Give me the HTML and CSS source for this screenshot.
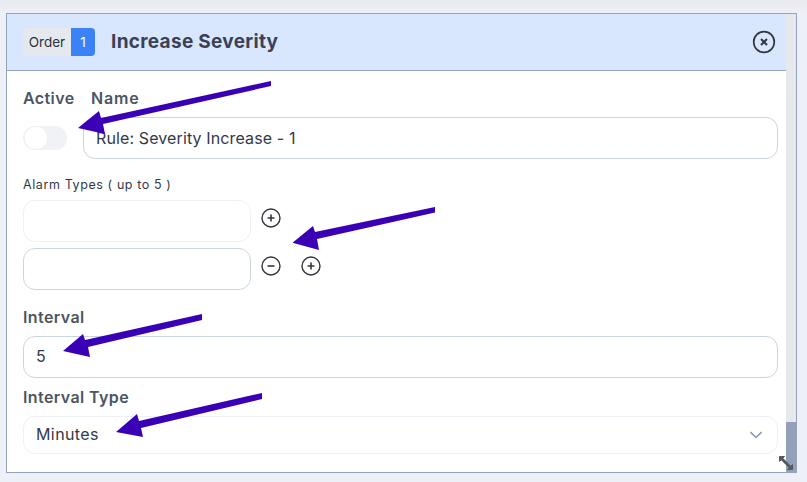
FILE: index.html
```html
<!DOCTYPE html>
<html lang="en">
<head>
<meta charset="utf-8">
<title>Increase Severity</title>
<link rel="stylesheet" href="styles.css">
</head>
<body>
<div class="modal">
  <div class="main">
    <header class="head">
      <div class="order"><span class="order-label">Order</span><span class="order-num">1</span></div>
      <h1 class="title">Increase Severity</h1>
      <svg class="close" width="24" height="24" viewBox="0 0 24 24" fill="none" stroke="#33363f"><circle cx="12" cy="12" r="10.3" stroke-width="1.7"/><path d="M9 9l6 6M15 9l-6 6" stroke-width="2"/></svg>
    </header>
    <div class="content">
      <div class="row-top">
        <div class="col-active">
          <div class="label">Active</div>
          <div class="toggle"><span class="knob"></span></div>
        </div>
        <div class="col-name">
          <div class="label name-label">Name</div>
          <div class="field name-field">Rule: Severity Increase - 1</div>
        </div>
      </div>
      <div class="small-label">Alarm Types ( up to 5 )</div>
      <div class="alarm-row">
        <div class="field alarm faint"></div>
        <svg class="ic" width="20" height="20" viewBox="0 0 20 20" fill="none" stroke="#33363f" stroke-width="1.4"><circle cx="10" cy="10" r="9"/><path d="M10 6.5v7M6.5 10h7" stroke-width="1.6"/></svg>
      </div>
      <div class="alarm-row second">
        <div class="field alarm"></div>
        <svg class="ic" width="20" height="20" viewBox="0 0 20 20" fill="none" stroke="#33363f" stroke-width="1.4"><circle cx="10" cy="10" r="9"/><path d="M6.5 10h7" stroke-width="1.6"/></svg>
        <svg class="ic" width="20" height="20" viewBox="0 0 20 20" fill="none" stroke="#33363f" stroke-width="1.4"><circle cx="10" cy="10" r="9"/><path d="M10 6.5v7M6.5 10h7" stroke-width="1.6"/></svg>
      </div>
      <div class="label interval-label">Interval</div>
      <div class="field wide">5</div>
      <div class="label type-label">Interval Type</div>
      <div class="field select faint">
        <span class="select-text">Minutes</span>
        <svg class="chevron" width="14" height="8" viewBox="0 0 14 8" fill="none" stroke="#8a96b4" stroke-width="1.6"><path d="M1.5 1.2L7 6.5l5.5-5.3"/></svg>
      </div>
    </div>
  </div>
  <div class="scrollbar"><div class="thumb"></div></div>
  <svg class="resize" width="14" height="14" viewBox="0 0 14 14" fill="none"><path d="M3 3l8 8" stroke="#555a60" stroke-width="3"/><path d="M0.500 5.500v-5h5z M13.500 8.500v5h-5z" fill="#555a60" stroke="#555a60"/></svg>
</div>
<svg class="arrows" width="807" height="482" viewBox="0 0 807 482" fill="#3a00b5">
  <path d="M271 86L271 81L101 118L99 111L78 128L105 134L103 124Z"/>
  <path d="M435 212.500L435 207L315 232L313 226L292.500 242.700L319 250L317 239Z"/>
  <path d="M202 320L202 314L85 340L83 334L63 351L90 357L88 347Z"/>
  <path d="M262 399L262 393L139 421L137 414L116 432L143 437L141 428Z"/>
</svg>
</body>
</html>
```
FILE: styles.css
```css
* { box-sizing: border-box; }
html, body { margin: 0; height: 100%; }
body {
  background: linear-gradient(#e9ebf0 0, #eef0f8 14px);
  font-family: "Inter", "Open Sans", sans-serif;
  color: #33394a;
  padding: 13px 10px 9px 6px;
  overflow: hidden;
  position: relative;
}
.modal {
  width: 791px;
  height: 460px;
  border: 1px solid #94a3b8;
  background: #fff;
  display: flex;
  position: relative;
}
.main { flex: 1; min-width: 0; }
.scrollbar {
  width: 10px;
  background: #e5e9ec;
  display: flex;
  flex-direction: column;
  justify-content: flex-end;
}
.thumb { height: 50px; background: #949fba; }
.head {
  height: 57px;
  background: #d9e7fe;
  border-bottom: 1px solid #94a3b8;
  display: flex;
  align-items: center;
  padding: 0 10px 0 16px;
}
.order {
  display: flex;
  height: 28px;
  border-radius: 4px;
  overflow: hidden;
  font-size: 13.5px;
  margin-right: 16px;
}
.order-label {
  width: 48px;
  background: #e5e9ee;
  color: #2d3340;
  display: flex;
  align-items: center;
  justify-content: center;
}
.order-num {
  width: 24px;
  background: #3b82f6;
  color: #fff;
  display: flex;
  align-items: center;
  justify-content: center;
}
.title {
  margin: 0;
  flex: 1;
  font-size: 19px;
  line-height: 24px;
  font-weight: 700;
  color: #3b4154;
  letter-spacing: 0.3px;
}
.close { display: block; }
.content { padding: 0 8px 0 16px; }
.row-top { display: flex; height: 88px; }
.col-active { width: 60px; }
.col-name { flex: 1; min-width: 0; }
.label {
  font-size: 16px;
  line-height: 20px;
  font-weight: 600;
  color: #4b5563;
  letter-spacing: 0.4px;
}
.col-active .label { padding-top: 17px; margin-bottom: 18px; }
.name-label { padding-top: 17px; padding-left: 8px; margin-bottom: 9px; letter-spacing: 0.8px; }
.toggle {
  width: 44px;
  height: 24px;
  border-radius: 12px;
  background: #f0f2f5;
  padding: 1px 2px;
}
.knob {
  display: block;
  width: 22px;
  height: 22px;
  border-radius: 50%;
  background: #fff;
}
.field {
  border: 1px solid #cbd5e1;
  border-radius: 12px;
  background: #fff;
  height: 42px;
  font-size: 16px;
  line-height: 38px;
  padding: 0 12px;
  color: #33394a;
}
.name-field { line-height: 40px; letter-spacing: 0.12px; }
.faint { border-color: #eef0f8; }
.small-label {
  font-size: 12.5px;
  line-height: 16px;
  letter-spacing: 0.6px;
  margin-top: 18px;
  margin-bottom: 7px;
  color: #33394a;
}
.alarm-row { display: flex; align-items: flex-start; }
.alarm-row.second { margin-top: 6px; }
.alarm { width: 228px; flex: none; }
.ic { margin: 8px 0 0 10px; flex: none; display: block; }
.ic + .ic { margin-left: 20px; }
.interval-label { margin-top: 17px; margin-bottom: 9px; }
.type-label { margin-top: 9px; margin-bottom: 9px; }
.select {
  height: 38px;
  line-height: 34px;
  display: flex;
  justify-content: space-between;
  align-items: flex-start;
  padding: 0 14px 0 12px;
}
.select-text { letter-spacing: 0.4px; }
.chevron { margin-top: 14px; }
.resize { position: absolute; right: 3px; bottom: 2px; }
.arrows { position: absolute; left: 0; top: 0; pointer-events: none; }
```
